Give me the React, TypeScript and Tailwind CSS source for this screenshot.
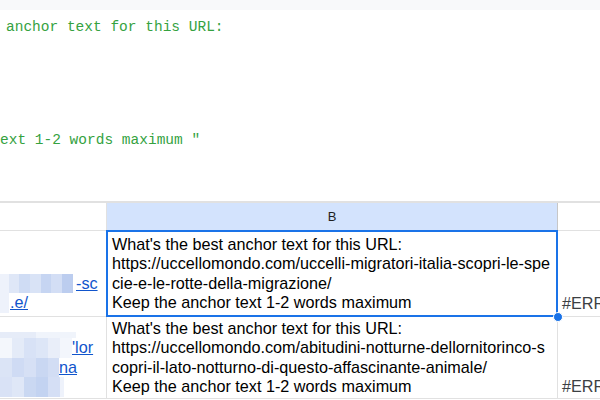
const pixRow1 = [
  ['#eef2fb', 9],
  ['#dfe7f7', 10],
  ['#cfdcf4', 11],
  ['#d9e3f6', 11],
  ['#c6d5f2', 10],
  ['#d3def5', 11],
  ['#bccdef', 11],
] as const;

const pixRow2a = [
  ['#f4f7fc', 12],
  ['#e4ebf8', 12],
  ['#d8e2f6', 12],
  ['#dde6f7', 12],
  ['#e9eef9', 12],
  ['#f3f6fc', 12],
] as const;

const pixRow2b = [
  ['#dbe4f6', 12],
  ['#cfdbf4', 12],
  ['#d6e0f5', 12],
  ['#c9d7f2', 12],
  ['#d2ddf4', 11],
] as const;

const pixRow2c = [
  ['#d9e2f6', 12],
  ['#dfe7f7', 12],
  ['#cad8f2', 12],
  ['#c3d3f1', 12],
  ['#d5dff5', 12],
  ['#eef2fb', 4],
] as const;

function Pix({ cells }: { cells: readonly (readonly [string, number])[] }) {
  return (
    <span className="flex h-[19.6px]">
      {cells.map(([c, w], i) => (
        <span key={i} className="h-full" style={{ backgroundColor: c, width: w }} />
      ))}
    </span>
  );
}

export default function App() {
  return (
    <div className="w-[600px] h-[400px] overflow-hidden bg-white font-['Liberation_Sans',Arial,sans-serif] text-[16.2px] text-[#1f1f1f]">
      <div className="h-[10px] bg-[#f8f9fa]" />
      <div className="h-[191px] font-['Liberation_Mono','DejaVu_Sans_Mono',monospace] text-[14.5px] text-[#35a23f] whitespace-pre">
        <div className="pt-[7px] pl-[6px] leading-[20px]">anchor text for this URL:</div>
        <div className="mt-[93px] leading-[20px]">ext 1-2 words maximum "</div>
      </div>

      {/* header row */}
      <div className="flex h-[30px] border-t-2 border-b border-[#e1e1e1]">
        <div className="w-[107px] shrink-0 border-r border-[#e1e1e1]" />
        <div className="w-[451px] shrink-0 bg-[#d3e3fd] border-r border-[#c7c7c7] flex items-center justify-center text-[13px] font-medium text-[#1f1f1f]">
          B
        </div>
        <div className="flex-1" />
      </div>

      {/* row 1 */}
      <div className="flex h-[86px] border-b border-[#e1e1e1]">
        <div className="w-[107px] shrink-0 border-r border-[#e1e1e1] flex flex-col justify-end pb-[3px] pr-[8px] leading-[19.6px] text-[#1155cc]">
          <div className="flex items-center">
            <Pix cells={pixRow1} />
            <span className="ml-[3px] underline">-sc</span>
          </div>
          <div className="flex items-center">
            <span className="w-[9px] h-[19.6px] bg-[#eef2fb]" />
            <span className="ml-[1px] underline">.e/</span>
          </div>
        </div>
        <div className="relative w-[451px] shrink-0 border-r border-[#e1e1e1] flex flex-col justify-end px-[5px] pb-[3px] leading-[19.6px] whitespace-nowrap text-black">
          <div>What's the best anchor text for this URL:</div>
          <div>https://uccellomondo.com/uccelli-migratori-italia-scopri-le-spe</div>
          <div>cie-e-le-rotte-della-migrazione/</div>
          <div>Keep the anchor text 1-2 words maximum</div>
          <div className="absolute -left-px -top-px -right-px -bottom-px border-2 border-[#1a73e8]" />
          <div className="absolute -right-[6px] -bottom-[6px] w-[10px] h-[10px] rounded-full bg-[#1a73e8] border border-white" />
        </div>
        <div className="flex-1 flex flex-col justify-end pl-[4px] pb-[2px] leading-[19.6px] whitespace-nowrap text-[#3c4043]">
          #ERROR!
        </div>
      </div>

      {/* row 2 */}
      <div className="flex h-[82px] border-b border-[#e1e1e1]">
        <div className="w-[107px] shrink-0 border-r border-[#e1e1e1] flex flex-col justify-end pb-[1px] leading-[19.6px] text-[#1155cc]">
          <div className="flex items-end h-[19.6px]">
            <span className="flex h-[6px] self-end">
              <span className="w-[36px] bg-[#e6ecf8]" />
              <span className="w-[40px] bg-[#f0f4fb]" />
            </span>
          </div>
          <div className="flex items-center">
            <Pix cells={pixRow2a} />
            <span className="underline">'lor</span>
          </div>
          <div className="flex items-center">
            <Pix cells={pixRow2b} />
            <span className="underline">  na</span>
          </div>
          <div className="flex items-start h-[19.6px]">
            <span className="flex h-[4px]">
              <Pix cells={pixRow2c} />
            </span>
          </div>
        </div>
        <div className="w-[451px] shrink-0 border-r border-[#e1e1e1] flex flex-col justify-end px-[5px] pb-[1px] leading-[19.6px] whitespace-nowrap text-black">
          <div>What's the best anchor text for this URL:</div>
          <div>https://uccellomondo.com/abitudini-notturne-dellornitorinco-s</div>
          <div>copri-il-lato-notturno-di-questo-affascinante-animale/</div>
          <div>Keep the anchor text 1-2 words maximum</div>
        </div>
        <div className="flex-1 flex flex-col justify-end pl-[4px] pb-[1px] leading-[19.6px] whitespace-nowrap text-[#3c4043]">
          #ERROR!
        </div>
      </div>
    </div>
  );
}
